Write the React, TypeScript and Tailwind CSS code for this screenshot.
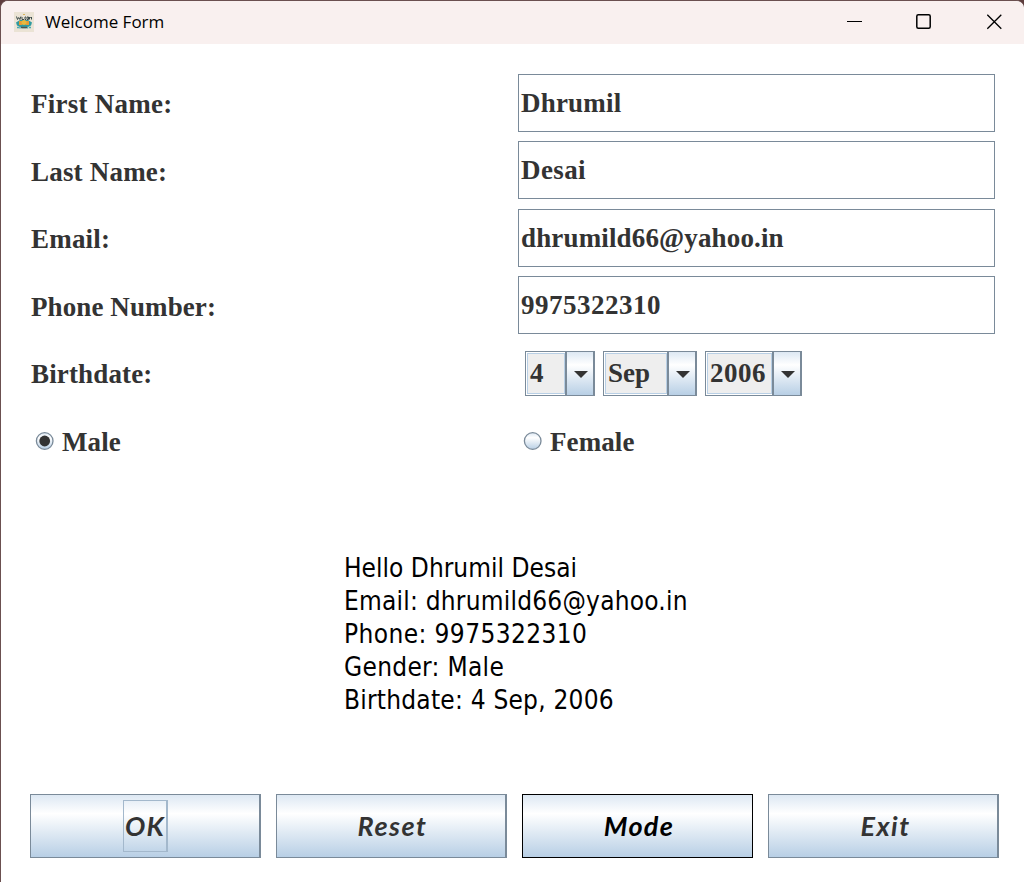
import { useState } from "react";

const serif = "font-['Liberation_Serif',serif] text-[27px] leading-[30px] font-bold text-[#333333] whitespace-pre";

const fields = [
  { label: "First Name:", value: "Dhrumil", box: "mb-[9px]", labelTrack: "pt-[15px] tracking-[0.25px]", valueTrack: "tracking-[0.2px]" },
  { label: "Last Name:", value: "Desai", box: "mb-[10px]", labelTrack: "pt-[16px] tracking-[0.2px]", valueTrack: "tracking-[0.4px]" },
  { label: "Email:", value: "dhrumild66@yahoo.in", box: "mb-[9px]", labelTrack: "pt-[15px] tracking-[0.2px]", valueTrack: "tracking-[0.15px]" },
  { label: "Phone Number:", value: "9975322310", box: "mb-[10px]", labelTrack: "pt-[16px] tracking-[0.1px]", valueTrack: "tracking-[0.5px]" },
];

const message = [
  { text: "Hello Dhrumil Desai", track: "tracking-[0.02px]" },
  { text: "Email: dhrumild66@yahoo.in", track: "tracking-[0.22px]" },
  { text: "Phone: 9975322310", track: "tracking-[0.4px]" },
  { text: "Gender: Male", track: "tracking-[0.3px]" },
  { text: "Birthdate: 4 Sep, 2006", track: "tracking-[0.22px]" },
];

function AppIcon() {
  return (
    <svg width="20" height="20" viewBox="0 0 20 20" className="mb-[2px] ml-[13px] shrink-0">
      <rect width="20" height="20" fill="#ebe3d5" />
      <path d="M2.500 4.500l1 3 1.200-2 1.200 2 1-3M8 5v2.500h2M12 5h-1v2.500h1M13 7.500V5h1.500v2.500zM15.500 7.500V5l1 1 1-1v2.500" stroke="#3b4a4a" strokeWidth="1" fill="none" />
      <path d="M2 10.500l4-2.500h8l4 2.500-1 3-3 1.500H6l-3-1.500z" fill="#2f9aa0" />
      <path d="M5 9h3v4H5zM12 9h3v4h-3z" fill="#e79a36" />
      <circle cx="10" cy="10.500" r="2.500" fill="#e8b93e" />
      <path d="M3 15.500h2M6 14.500v2M8 15.500h4M13.500 14.500v2M15 15.500h2" stroke="#4aa9ae" strokeWidth="1.500" />
      <path d="M7 15.500h6" stroke="#4c5450" strokeWidth="1.500" />
      <path d="M9 2.500h2" stroke="#d8b35a" />
    </svg>
  );
}

function Combo({ value, width, track }: { value: string; width: string; track: string }) {
  return (
    <div className={`flex h-[45px] border border-r-2 border-[#7a8a99] ${width}`}>
      <div className="m-px mr-0 flex flex-1 items-center border border-[#b8cfe5] bg-[#eeeeee] pb-px pl-[2px]">
        <span className={`${serif} ${track}`}>{value}</span>
      </div>
      <div className="flex w-[28px] items-center justify-center border-l-2 border-[#7a8a99] bg-linear-to-b from-[#dde8f3] via-white via-30% to-[#b8cfe5]">
        <svg width="14" height="7" viewBox="0 0 14 7" className="mt-[2px] ml-[2px]">
          <path d="M0 0h14L7 7z" fill="#333333" />
        </svg>
      </div>
    </div>
  );
}

function Radio({ label, checked, onSelect }: { label: string; checked: boolean; onSelect: () => void }) {
  return (
    <button type="button" role="radio" aria-checked={checked} onClick={onSelect} className="flex items-center">
      <svg width="20" height="20" viewBox="0 0 20 20" className="mb-[2px]">
        <defs>
          <linearGradient id={`shade-${label}`} x1="0" y1="0" x2="0" y2="1">
            <stop offset="0" stopColor="#dde8f3" />
            <stop offset=".3" stopColor="#ffffff" />
            <stop offset="1" stopColor="#b8cfe5" />
          </linearGradient>
        </defs>
        <circle cx="9.700" cy="10" r="8.300" fill={`url(#shade-${label})`} stroke="#7a8a99" strokeWidth="1.300" />
        {checked && <circle cx="9.700" cy="10" r="5.400" fill="#333333" />}
      </svg>
      <span className={`ml-[7px] pt-px tracking-[0.1px] ${serif}`}>{label}</span>
    </button>
  );
}

const actions = [
  { label: "OK", frame: "border-[#7a8a99] border-r-2 text-[#333333]", text: "h-[52px] w-[45px] border border-r-2 border-[#a3b8cc] tracking-[1.2px] pl-px" },
  { label: "Reset", frame: "border-[#7a8a99] border-r-2 text-[#333333]", text: "tracking-[1.5px] pl-[3px]" },
  { label: "Mode", frame: "border-black text-black", text: "tracking-[1.3px] pl-[3px]" },
  { label: "Exit", frame: "border-[#7a8a99] border-r-2 text-[#333333]", text: "tracking-[1.5px] pl-[5px]" },
];

export default function App() {
  const [gender, setGender] = useState("Male");
  return (
    <div className="h-[882px] w-[1024px] overflow-hidden bg-[#5e3d3d]">
      <div className="flex h-full flex-col overflow-hidden rounded-t-[8px] border-t border-l border-[#6b5050] bg-white">
        <header className="flex h-[43px] shrink-0 items-center bg-[#f9f0ef]">
          <AppIcon />
          <h1 className="mb-[2px] ml-[11px] font-['Open_Sans',sans-serif] text-[17px] leading-6 text-black">Welcome Form</h1>
          <div className="mb-px ml-auto flex items-center gap-[54px] pr-[22px]">
            <svg width="16" height="16" viewBox="0 0 16 16"><path d="M1 7.500h15" stroke="#000" /></svg>
            <svg width="16" height="16" viewBox="0 0 16 16"><rect x=".8" y=".8" width="13.400" height="13.400" rx="1.500" stroke="#000" strokeWidth="1.500" fill="none" /></svg>
            <svg width="16" height="16" viewBox="0 0 16 16"><path d="M1.300.8l14 14M15.300.8l-14 14" stroke="#000" strokeWidth="1.300" /></svg>
          </div>
        </header>

        <main className="flex flex-1 flex-col pt-[30px] pl-[29px]">
          {fields.map((f) => (
            <div key={f.label} className={`flex ${f.box}`}>
              <div className={`w-[488px] pl-px ${f.labelTrack} ${serif}`}>{f.label}</div>
              <div className={`flex h-[58px] w-[477px] items-center border border-[#7a8a99] pl-[2px] ${f.valueTrack} ${serif}`}>{f.value}</div>
            </div>
          ))}
          <div className="flex h-[67px] items-start pt-[7px]">
            <div className={`w-[495px] pt-[8px] pl-px tracking-[0.15px] ${serif}`}>Birthdate:</div>
            <div className="flex gap-[8px]">
              <Combo value="4" width="w-[70px]" track="" />
              <Combo value="Sep" width="w-[94px]" track="" />
              <Combo value="2006" width="w-[97px]" track="tracking-[0.5px]" />
            </div>
          </div>
          <div role="radiogroup" className="grid h-[61px] grid-cols-[488px_1fr] items-center pl-[5px]">
            <Radio label="Male" checked={gender === "Male"} onSelect={() => setGender("Male")} />
            <Radio label="Female" checked={gender === "Female"} onSelect={() => setGender("Female")} />
          </div>
          <div className="mt-[80px] ml-[314px] font-['DejaVu_Sans_Condensed','DejaVu_Sans',sans-serif] text-[26px] leading-[33px] font-stretch-condensed whitespace-pre text-black">
            {message.map((line) => (
              <p key={line.text} className={line.track}>{line.text}</p>
            ))}
          </div>
          <div className="mt-auto mb-[24px] flex gap-[15px]">
            {actions.map((a) => (
              <button key={a.label} type="button" className={`flex h-[64px] w-[231px] items-center justify-center border bg-linear-to-b from-[#dde8f3] via-white via-30% to-[#b8cfe5] font-['Lato',cursive] text-[27px] leading-8 font-bold italic ${a.frame}`}>
                <span className={`flex items-center justify-center ${a.text}`}>{a.label}</span>
              </button>
            ))}
          </div>
        </main>
      </div>
    </div>
  );
}
